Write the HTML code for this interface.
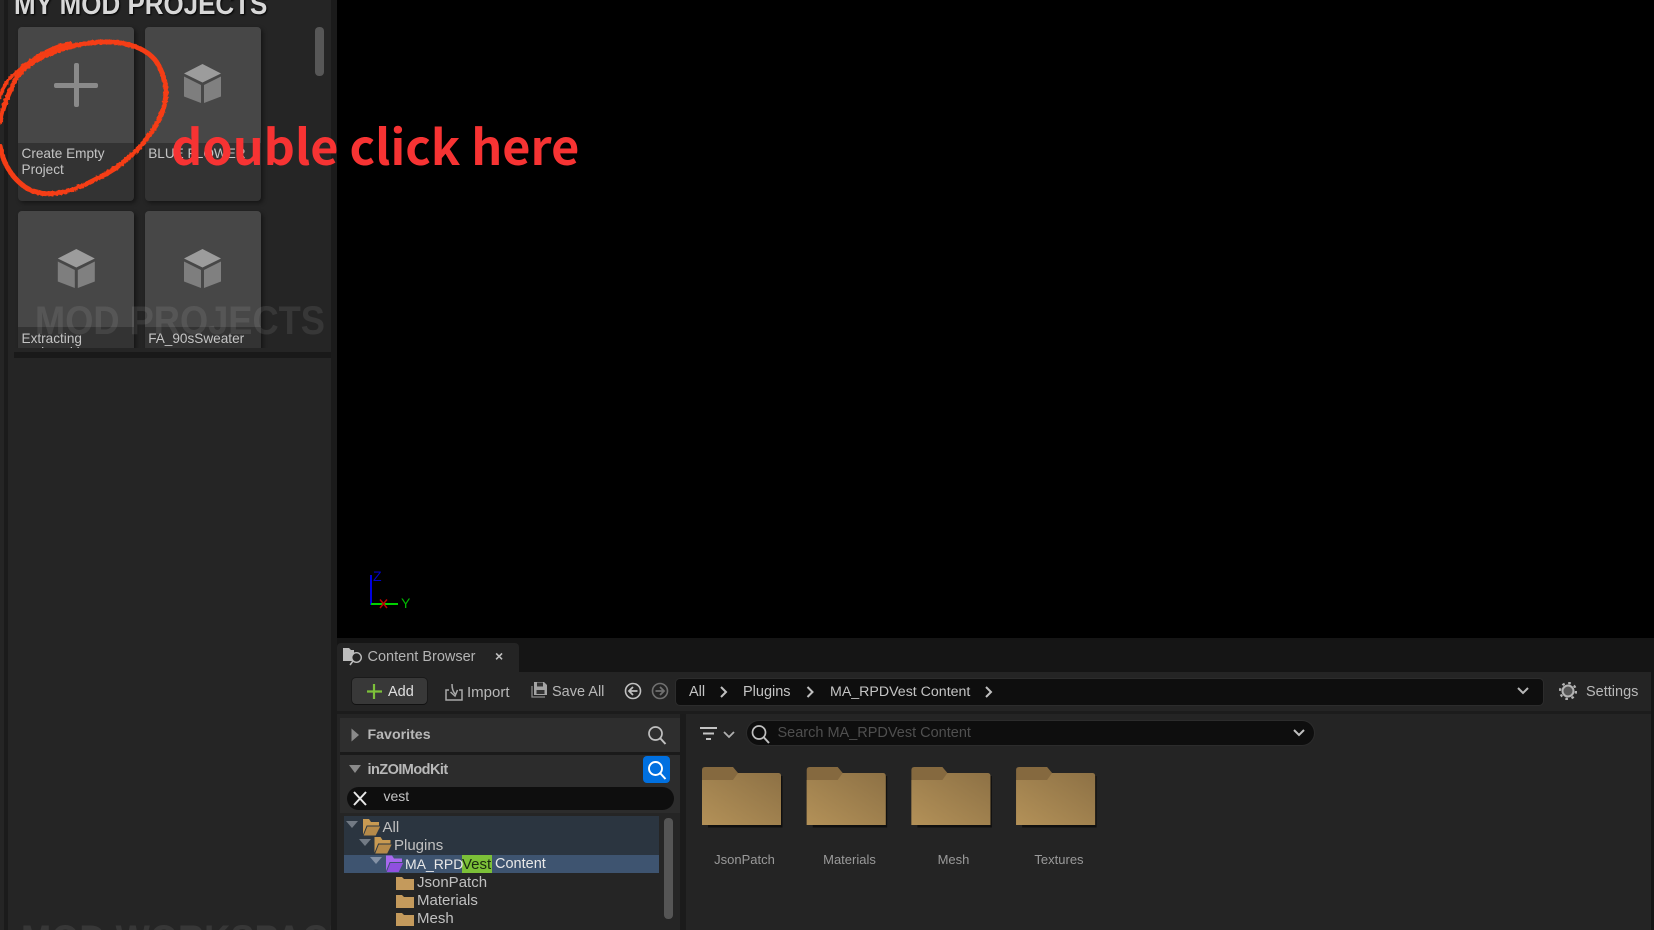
<!DOCTYPE html>
<html><head><meta charset="utf-8"><style>
html,body{margin:0;padding:0;background:#000}
#r{position:relative;width:1654px;height:930px;overflow:hidden;background:#000;font-family:"Liberation Sans",sans-serif;filter:blur(.35px)}
#r div,#r svg{position:absolute}
.t{white-space:nowrap;line-height:1}
.card{width:116px;background:#333;border-radius:4px;box-shadow:2px 2px 4px rgba(0,0,0,.45);overflow:hidden}
.card .th{position:absolute;left:0;top:0;width:116px;height:116px;background:#474747}
.lbl{font-size:13.600px;color:#c4c4c4;line-height:16px;white-space:nowrap}
.tb{font-size:14.500px;color:#b8b8b8;white-space:nowrap;line-height:1}
.tr{font-size:15px;color:#c0c0c0;white-space:nowrap;line-height:1}
.fl{font-size:13px;color:#9a9a9a;white-space:nowrap;line-height:1;transform:translateX(-50%)}
</style></head><body><div id="r">
<!-- left side -->
<div style="left:0;top:0;width:337px;height:930px;background:#1b1b1b"></div>
<div style="left:0;top:0;width:4px;height:930px;background:#252525"></div>
<div style="left:8px;top:0;width:323px;height:930px;background:#252525"></div>
<div style="left:14px;top:352px;width:317px;height:6px;background:#191919"></div>
<div class="t" style="left:14px;top:-9px;font-size:29px;font-weight:bold;color:#d8d8d8;transform:scaleX(.895);transform-origin:0 0;text-shadow:1px 1px 2px #000">MY MOD PROJECTS</div>
<div style="left:315px;top:27px;width:9px;height:49px;background:#575757;border-radius:4px"></div>

<div style="left:0;top:0;width:331px;height:348px;overflow:hidden">
<div class="card" style="left:18px;top:27px;height:174px"><div class="th"></div><div class="lbl" style="left:3.500px;top:119px">Create Empty<br>Project</div></div>
<div class="card" style="left:144.700px;top:27px;height:174px"><div class="th"></div><div class="lbl" style="left:3.500px;top:119px">BLUE FLOWER</div></div>
<div class="card" style="left:18px;top:211px;height:180px"><div class="th"></div><div class="lbl" style="left:3.500px;top:119.500px">Extracting</div><div class="lbl" style="left:3.500px;top:134px">and packing</div></div>
<div class="card" style="left:144.700px;top:211px;height:180px"><div class="th"></div><div class="lbl" style="left:3.500px;top:119.500px">FA_90sSweater</div></div>
</div>

<!-- plus -->
<div style="left:73.500px;top:63px;width:5px;height:44px;background:#8a8a8a;border-radius:2px"></div>
<div style="left:54px;top:82.500px;width:44px;height:5px;background:#8a8a8a;border-radius:2px"></div>
<!-- cubes -->
<svg style="left:0;top:0" width="331" height="348">
<g transform="translate(202.500,83)"><path d="M0-19 18.500-9.500 0-.5-18.500-9.500Z" fill="#9c9c9c"/><path d="M-18.500-6.500-1.500 2V20L-18.500 13.500Z" fill="#7e7e7e"/><path d="M18.500-6.500 1.500 2V20L18.500 13.500Z" fill="#808080"/></g>
<g transform="translate(76.300,268)"><path d="M0-19 18.500-9.500 0-.5-18.500-9.500Z" fill="#9c9c9c"/><path d="M-18.500-6.500-1.500 2V20L-18.500 13.500Z" fill="#7e7e7e"/><path d="M18.500-6.500 1.500 2V20L18.500 13.500Z" fill="#808080"/></g>
<g transform="translate(202.500,268)"><path d="M0-19 18.500-9.500 0-.5-18.500-9.500Z" fill="#9c9c9c"/><path d="M-18.500-6.500-1.500 2V20L-18.500 13.500Z" fill="#7e7e7e"/><path d="M18.500-6.500 1.500 2V20L18.500 13.500Z" fill="#808080"/></g>
</svg>
<div class="t" style="left:34.500px;top:301px;font-size:40px;font-weight:bold;color:rgba(255,255,255,.085);transform:scaleX(.906);transform-origin:0 0">MOD PROJECTS</div>
<div style="left:0;top:900px;width:331px;height:30px;overflow:hidden"><div class="t" style="left:21px;top:20px;font-size:40px;font-weight:bold;color:rgba(255,255,255,.085);transform:scaleX(.906);transform-origin:0 0">MOD WORKSPACE</div></div>

<!-- axis -->
<svg style="left:365px;top:565px" width="50" height="50">
<path d="M6 10V40" stroke="#0000e0" stroke-width="2"/><path d="M6 39H33" stroke="#00d000" stroke-width="2"/><path d="M15 34.500 22 43M22 34.500 15 43" stroke="#c00000" stroke-width="1.500" fill="none"/>
<text x="8" y="16" font-size="14" fill="#0000c8" font-family="Liberation Sans">Z</text><text x="36" y="43" font-size="14" fill="#00b800" font-family="Liberation Sans">Y</text>
</svg>

<!-- content browser bg -->
<div style="left:337px;top:638px;width:1317px;height:292px;background:#151515"></div>
<div style="left:337px;top:643px;width:182px;height:30px;background:#242424;border-radius:4px 4px 0 0"></div>
<div style="left:337px;top:672px;width:1317px;height:258px;background:#242424"></div>
<div style="left:337px;top:711px;width:1317px;height:3px;background:#1c1c1c"></div>
<div style="left:1651px;top:638px;width:3px;height:292px;background:#151515"></div>
<svg style="left:341px;top:646px" width="24" height="22" fill="none"><path d="M2 2H8L10 4H13V15H2Z" fill="#bdbdbd"/><circle cx="15.500" cy="11.500" r="4.800" fill="#242424" stroke="#bdbdbd" stroke-width="1.400"/><path d="M12 15 9 19" stroke="#bdbdbd" stroke-width="1.600"/></svg>
<div class="t" style="left:367.500px;top:650px;font-size:14.500px;color:#b4b4b4">Content Browser</div>
<div class="t" style="left:495px;top:649px;font-size:14px;font-weight:bold;color:#c0c0c0">×</div>

<!-- toolbar -->
<div style="left:352px;top:678px;width:75px;height:26px;background:#383838;border-radius:4px;box-shadow:0 1px 0 #111,0 0 0 1px #1a1a1a"></div>
<svg style="left:366px;top:683px" width="18" height="18"><path d="M8 1V16M1 8.500H16" stroke="#7dc13a" stroke-width="2.200"/></svg>
<div class="t" style="left:388px;top:685px;font-size:14.500px;color:#e0e0e0">Add</div>
<svg style="left:444px;top:682px" width="20" height="20" fill="none" stroke="#a8a8a8" stroke-width="1.500"><path d="M5 8H2V18H18V8H15"/><path d="M8 2C8 7 9 9 11 12M6.500 10 11 14 13.500 8"/></svg>
<div class="tb" style="left:467px;top:685px;font-size:15px">Import</div>
<svg style="left:531px;top:681px" width="18" height="18"><path d="M3 1H13L16 4V14H3Z" fill="#a4a4a4"/><rect x="6" y="1.500" width="6" height="4" fill="#333"/><rect x="5.500" y="9" width="8" height="4" fill="#333"/><path d="M1 5V16H14" fill="none" stroke="#8a8a8a" stroke-width="1.300"/></svg>
<div class="tb" style="left:552px;top:685px">Save All</div>
<svg style="left:623px;top:681px" width="20" height="20" fill="none" stroke="#c0c0c0" stroke-width="1.600"><circle cx="10" cy="10" r="7.500"/><path d="M14.500 10H6.500M10 6 6 10 10 14" stroke-width="1.800"/></svg>
<svg style="left:650px;top:681px" width="20" height="20" fill="none" stroke="#707070" stroke-width="1.600"><circle cx="10" cy="10" r="7.500"/><path d="M5.500 10H13.500M10 6 14 10 10 14" stroke-width="1.800"/></svg>
<div style="left:676px;top:679px;width:867px;height:26px;background:#0e0e0e;border-radius:4px;box-shadow:0 0 0 1px #2c2c2c"></div>
<div class="tb" style="left:689px;top:685px;color:#c4c4c4">All</div>
<div class="tb" style="left:743px;top:685px;color:#c4c4c4">Plugins</div>
<div class="tb" style="left:830px;top:685px;color:#c4c4c4;font-size:14.200px">MA_RPDVest Content</div>
<svg style="left:715px;top:683px" width="290" height="18" fill="none" stroke="#c0c0c0" stroke-width="2"><path d="M6 4 11 9 6 14M92.500 4 97.500 9 92.500 14M271 4 276 9 271 14"/></svg>
<svg style="left:1515px;top:684px" width="16" height="14" fill="none" stroke="#b8b8b8" stroke-width="2"><path d="M3 4 8 9 13 4"/></svg>
<svg style="left:1559px;top:682px" width="18" height="18"><circle cx="9" cy="9" r="5.500" fill="#555" stroke="#b4b4b4" stroke-width="2"/><circle cx="9" cy="9" r="8" fill="none" stroke="#b4b4b4" stroke-width="2.200" stroke-dasharray="2.600 3.680"/></svg>
<div class="tb" style="left:1586px;top:685px">Settings</div>

<!-- left pane -->
<div style="left:340px;top:718px;width:340px;height:34px;background:#2e2e2e"></div>
<div style="left:340px;top:755px;width:340px;height:60px;background:#2c2c2c"></div>
<div style="left:340px;top:752px;width:340px;height:3px;background:#1a1a1a"></div>
<div style="left:340px;top:813px;width:340px;height:117px;background:#252525"></div>
<div style="left:680px;top:714px;width:6px;height:216px;background:#1b1b1b"></div>
<svg style="left:350px;top:727px" width="12" height="16"><path d="M1.500 1.500 9 8 1.500 14.500Z" fill="#8a8a8a"/></svg>
<div class="t" style="left:367.500px;top:728px;font-size:14.200px;font-weight:bold;color:#b8b8b8">Favorites</div>
<svg style="left:646px;top:724px" width="22" height="22" fill="none" stroke="#c0c0c0" stroke-width="1.700"><circle cx="9.500" cy="9.500" r="6.500"/><path d="M14 14 19.500 20" stroke-width="2"/></svg>
<svg style="left:348px;top:763px" width="16" height="12"><path d="M1 2H13L7 10Z" fill="#8a8a8a"/></svg>
<div class="t" style="left:367.500px;top:763px;font-size:14.500px;font-weight:bold;color:#b8b8b8;letter-spacing:-.55px">inZOIModKit</div>
<div style="left:643px;top:756px;width:27px;height:27px;background:#0070e0;border-radius:4px"></div>
<svg style="left:646px;top:759px" width="22" height="22" fill="none" stroke="#fff" stroke-width="1.900"><circle cx="9.500" cy="9.500" r="6.500"/><path d="M14 14 19.500 20" stroke-width="2"/></svg>
<div style="left:347px;top:787px;width:327px;height:23px;background:#0e0e0e;border-radius:12px"></div>
<svg style="left:351px;top:789px" width="18" height="18" fill="none" stroke="#e8e8e8" stroke-width="2"><path d="M3 3 15 16M15 3 3 16"/></svg>
<div class="t" style="left:383.500px;top:789px;font-size:14px;color:#c4c4c4">vest</div>

<!-- tree -->
<div style="left:344px;top:816px;width:315px;height:39px;background:#2b3540"></div>
<div style="left:344px;top:855px;width:315px;height:18px;background:#3e5470"></div>
<div style="left:664px;top:818px;width:9px;height:101px;background:#555;border-radius:4px"></div>
<svg style="left:345px;top:817px" width="120" height="113">
<path d="M1 4H13L7 11Z" fill="#727a84"/><path d="M14 22H26L20 29Z" fill="#727a84"/><path d="M25 40H37L31 47Z" fill="#8492a6"/>
<g><path d="M18 2H24L26 5H34V9H22L18 19Z" fill="#c89a52"/><path d="M22 9H36L31 19H18Z" fill="#b58a4a" stroke="#2b3540" stroke-width="1"/></g>
<g transform="translate(11.500,18)"><path d="M18 2H24L26 5H34V9H22L18 19Z" fill="#c89a52"/><path d="M22 9H36L31 19H18Z" fill="#b58a4a" stroke="#2b3540" stroke-width="1"/></g>
<g transform="translate(23,36.500)"><path d="M18 2H24L26 5H34V9H22L18 19Z" fill="#a868f0"/><path d="M22 9H36L31 19H18Z" fill="#9050e0" stroke="#3e5470" stroke-width="1"/></g>
<g fill="#c49a5c"><path d="M51 60H57L59 62H69V73H51Z"/><path d="M51 78H57L59 80H69V91H51Z"/><path d="M51 96H57L59 98H69V109H51Z"/></g>
</svg>
<div class="tr" style="left:382.500px;top:820px">All</div>
<div class="tr" style="left:394px;top:838px">Plugins</div>
<div style="left:462px;top:855px;width:30px;height:18px;background:#7cc038"></div>
<div class="tr" style="left:405px;top:857px;color:#e8e8e8;font-size:14px">MA_RPD</div>
<div class="tr" style="left:462px;top:857px;color:#1a2a10">Vest</div>
<div class="tr" style="left:495px;top:857px;color:#e8e8e8;font-size:14.500px">Content</div>
<div class="tr" style="left:417px;top:875px">JsonPatch</div>
<div class="tr" style="left:417px;top:893px">Materials</div>
<div class="tr" style="left:417px;top:911px">Mesh</div>

<!-- right pane -->
<svg style="left:699.500px;top:726px" width="40" height="18" fill="none"><path d="M0 2H17M3 7.500H14M6 13H11" stroke="#c4c4c4" stroke-width="2"/><path d="M24 6 29 11 34 6" stroke="#b0b0b0" stroke-width="1.800"/></svg>
<div style="left:747px;top:721px;width:567px;height:24px;background:#0e0e0e;border-radius:12px;box-shadow:0 0 0 1px #2c2c2c"></div>
<svg style="left:749px;top:723px" width="22" height="22" fill="none" stroke="#c0c0c0" stroke-width="1.700"><circle cx="10" cy="9.500" r="6.500"/><path d="M14.500 14 20 20" stroke-width="2"/></svg>
<div class="t" style="left:777.500px;top:726px;font-size:14.500px;color:#4f4f4f">Search MA_RPDVest Content</div>
<svg style="left:1291px;top:726px" width="16" height="14" fill="none" stroke="#c0c0c0" stroke-width="2"><path d="M3 4 8 9 13 4"/></svg>

<svg style="left:698px;top:762px" width="400" height="72">
<defs><linearGradient id="f" x1="0" y1="1" x2="1" y2="0"><stop offset="0" stop-color="#b39158"/><stop offset="1" stop-color="#8d7145"/></linearGradient></defs>
<g transform="translate(0,0)"><rect x="10" y="14" width="74.500" height="51.500" fill="#000" opacity=".55"/><path d="M4 8Q4 5 7 5H35L40 11H80Q83 11 83 14V63H4Z" fill="#85693f"/><path d="M4 18H35L40 11H80Q83 11 83 14V63H4Z" fill="url(#f)"/></g>
<g transform="translate(104.700,0)"><rect x="10" y="14" width="74.500" height="51.500" fill="#000" opacity=".55"/><path d="M4 8Q4 5 7 5H35L40 11H80Q83 11 83 14V63H4Z" fill="#85693f"/><path d="M4 18H35L40 11H80Q83 11 83 14V63H4Z" fill="url(#f)"/></g>
<g transform="translate(209.400,0)"><rect x="10" y="14" width="74.500" height="51.500" fill="#000" opacity=".55"/><path d="M4 8Q4 5 7 5H35L40 11H80Q83 11 83 14V63H4Z" fill="#85693f"/><path d="M4 18H35L40 11H80Q83 11 83 14V63H4Z" fill="url(#f)"/></g>
<g transform="translate(314.100,0)"><rect x="10" y="14" width="74.500" height="51.500" fill="#000" opacity=".55"/><path d="M4 8Q4 5 7 5H35L40 11H80Q83 11 83 14V63H4Z" fill="#85693f"/><path d="M4 18H35L40 11H80Q83 11 83 14V63H4Z" fill="url(#f)"/></g>
</svg>
<div class="fl" style="left:744.500px;top:853px">JsonPatch</div>
<div class="fl" style="left:849.500px;top:853px">Materials</div>
<div class="fl" style="left:953.500px;top:853px">Mesh</div>
<div class="fl" style="left:1059px;top:853px">Textures</div>

<!-- annotation -->
<svg style="left:0;top:0" width="200" height="215" fill="none" stroke="#f53c12" stroke-linecap="round">
<defs><filter id="rough" x="-10%" y="-10%" width="120%" height="120%"><feTurbulence type="fractalNoise" baseFrequency=".35" numOctaves="2" seed="3"/><feDisplacementMap in="SourceGraphic" scale="2.500"/></filter></defs>
<g filter="url(#rough)">
<path d="M70 43C50 47 25 62 12 76 6 82 2 90 0 97" stroke-width="3.500"/>
<path d="M0 122C3 105 10 90 17 77 30 60 60 45 100 42 130 41 152 50 160 68 168 85 168 98 160 118 148 142 125 165 100 177 75 191 50 199 30 190 12 180 3 163 0 146" stroke-width="5"/>
</g></svg>
<div class="t" style="left:171px;top:120px;font-size:48.600px;font-weight:bold;color:#f73333;font-family:'Noto Sans CJK JP','Liberation Sans',sans-serif">double click here</div>
</div></body></html>
